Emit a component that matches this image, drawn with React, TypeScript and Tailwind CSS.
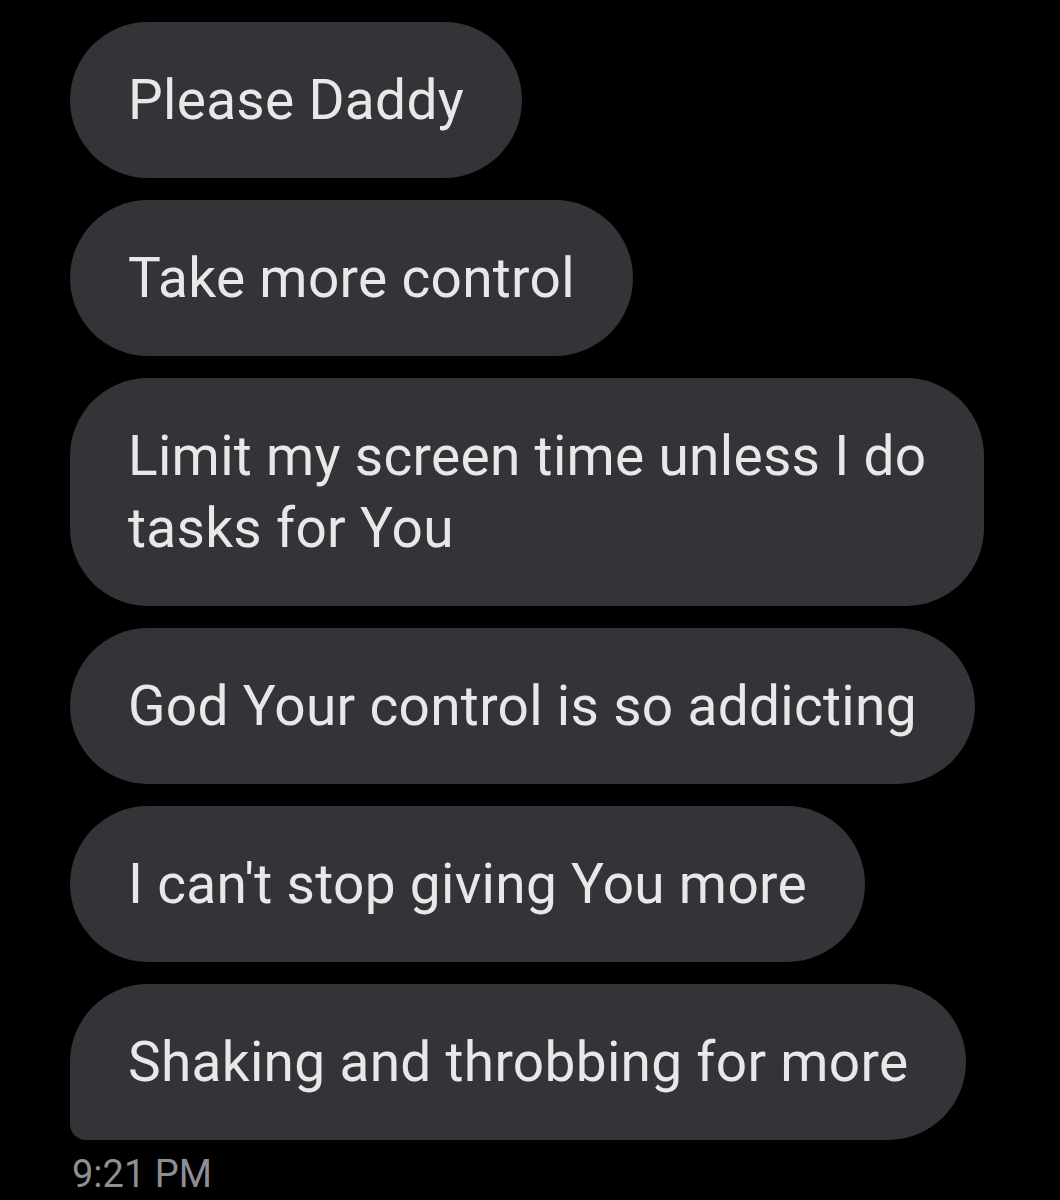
const messages = [
  ["Please Daddy"],
  ["Take more control"],
  ["Limit my screen time unless I do", "tasks for You"],
  ["God Your control is so addicting"],
  ["I can't stop giving You more"],
  ["Shaking and throbbing for more"],
];

export default function App() {
  return (
    <div className="min-h-[1200px] w-[1060px] overflow-hidden bg-black pl-[70px] pt-[22px] font-['Roboto',sans-serif]">
      <div className="flex flex-col items-start gap-[22px]">
        {messages.map((lines, i) => (
          <div
            key={lines[0]}
            className={
              i === messages.length - 1
                ? "whitespace-nowrap rounded-[78px] rounded-bl-[16px] bg-[#333438] px-[58px] py-[42px] text-[55px] leading-[72px] tracking-[0.3px] text-[#e8e8e8]"
                : "whitespace-nowrap rounded-[78px] bg-[#333438] px-[58px] py-[42px] text-[55px] leading-[72px] tracking-[0.3px] text-[#e8e8e8]"
            }
          >
            {lines.map((line) => (
              <div key={line}>{line}</div>
            ))}
          </div>
        ))}
      </div>
      <p className="mt-[12px] pl-[2px] text-[38px] leading-[44px] text-[#8e8e93]">9:21 PM</p>
    </div>
  );
}
